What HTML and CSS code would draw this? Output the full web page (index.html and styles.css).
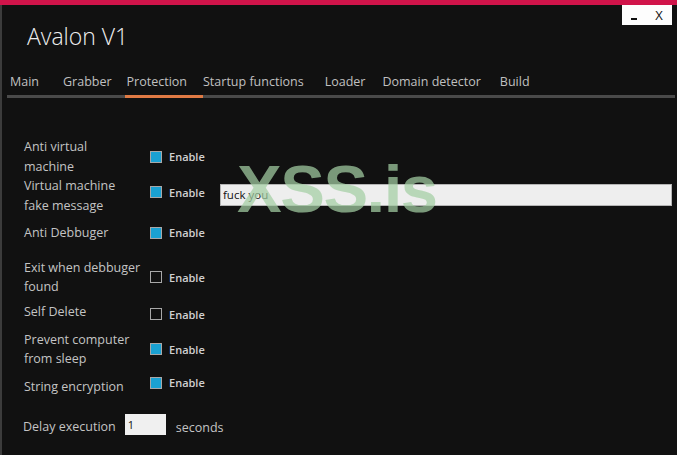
FILE: index.html
```html
<!DOCTYPE html>
<html lang="en">

<head>
    <meta charset="UTF-8">
    <title>Avalon V1</title>
    <link rel="stylesheet" href="styles.css">
</head>

<body>
    <div class="topbar"></div>
    <div class="window">
        <div class="win-buttons">
            <span class="win-min"></span>
            <span class="win-close">X</span>
        </div>

        <h1 class="title">Avalon V1</h1>

        <nav class="tabs">
            <span class="tab tab-main">Main</span>
            <span class="tab tab-grabber">Grabber</span>
            <span class="tab tab-protection active">Protection</span>
            <span class="tab tab-startup">Startup functions</span>
            <span class="tab tab-loader">Loader</span>
            <span class="tab tab-domain">Domain detector</span>
            <span class="tab tab-build">Build</span>
        </nav>

        <div class="options">
            <div class="row">
                <div class="label">Anti virtual<br>machine</div>
                <label class="check"><span class="box checked"></span>Enable</label>
            </div>
            <div class="row">
                <div class="label">Virtual machine<br>fake message</div>
                <label class="check high"><span class="box checked"></span>Enable</label>
                <input class="message" type="text" value="fuck you">
            </div>
            <div class="row gap-m">
                <div class="label">Anti Debbuger</div>
                <label class="check"><span class="box checked"></span>Enable</label>
            </div>
            <div class="row gap-l">
                <div class="label">Exit when debbuger<br>found</div>
                <label class="check"><span class="box"></span>Enable</label>
            </div>
            <div class="row gap-s">
                <div class="label">Self Delete</div>
                <label class="check low"><span class="box"></span>Enable</label>
            </div>
            <div class="row gap-m">
                <div class="label">Prevent computer<br>from sleep</div>
                <label class="check"><span class="box checked"></span>Enable</label>
            </div>
            <div class="row gap-m">
                <div class="label">String encryption</div>
                <label class="check high"><span class="box checked"></span>Enable</label>
            </div>

            <div class="delay">
                <span>Delay execution</span>
                <input class="delay-input" type="text" value="1">
                <span class="seconds">seconds</span>
            </div>
        </div>

        <div class="watermark">XSS.is</div>
    </div>
</body>

</html>
```

FILE: styles.css
```css
body {
    margin: 0;
    width: 677px;
    height: 455px;
    overflow: hidden;
    background-color: #111111;
    font-family: "Open Sans", "Noto Sans", sans-serif;
    color: #c8c8c8;
}

.topbar {
    height: 5px;
    background-color: #d0144a;
}

.window {
    position: relative;
    height: 450px;
    border-left: 2px solid #3c3c3c;
    box-sizing: border-box;
}

.win-buttons {
    position: absolute;
    top: 0;
    right: 5px;
    width: 50px;
    height: 20px;
    background-color: #fdfdfd;
    display: flex;
    align-items: center;
    justify-content: space-around;
    color: #111;
    font-size: 13px;
}

.win-min {
    width: 6px;
    height: 2px;
    margin-top: 8px;
    background-color: #111;
}

.title {
    margin: 0;
    padding: 15px 0 0 25px;
    font-size: 23px;
    font-weight: 300;
    color: #eeeeee;
    line-height: 32px;
}

.tabs {
    display: flex;
    margin: 21px 2px 0 5px;
    border-bottom: 3px solid #4a4a4a;
}

.tab {
    font-size: 12.5px;
    color: #c0c0c0;
    padding: 0 0 5px 0;
    margin-bottom: -3px;
    border-bottom: 3px solid transparent;
}

.tab.active {
    border-color: #e07a44;
}

.tab-main { padding-left: 3px; }
.tab-grabber { margin-left: 24px; }
.tab-protection { margin-left: 13px; padding: 0 16px 5px 2px; }
.tab-loader { margin-left: 21px; }
.tab-domain { margin-left: 17px; }
.tab-build { margin-left: 19px; }

.options {
    padding: 39px 0 0 22px;
}

.row {
    display: flex;
    align-items: center;
}

.gap-s { margin-top: 5px; }
.gap-m { margin-top: 8px; }
.gap-l { margin-top: 15px; }

.label {
    width: 126px;
    font-size: 12.5px;
    line-height: 19.5px;
    color: #c4c4c4;
}

.check {
    display: flex;
    align-items: center;
    font-size: 11px;
    font-weight: 600;
    color: #d0d0d0;
    width: 70px;
}

.check.low { margin-top: 5px; }
.check.high { margin-top: -7px; }

.box {
    width: 10px;
    height: 10px;
    border: 1px solid #a8a8a8;
    margin-right: 7px;
    box-sizing: content-box;
}

.box.checked {
    background-color: #1aa1d2;
}

.message {
    flex: 1;
    height: 22px;
    margin: -2px 5px 0 0;
    padding: 0 2px;
    border: 1px solid #b4b4b4;
    background-color: #eeeeee;
    font-family: "Open Sans", "Noto Sans", sans-serif;
    font-size: 11.5px;
    color: #111;
    box-sizing: border-box;
}

.delay {
    display: flex;
    align-items: center;
    margin: 21px 0 0 -1px;
    font-size: 12.5px;
    color: #c4c4c4;
}

.delay-input {
    width: 41px;
    height: 21px;
    margin: -4px 10px 0 9px;
    padding: 0 3px;
    border: none;
    background-color: #f0f0f0;
    font-family: "Open Sans", "Noto Sans", sans-serif;
    font-size: 11px;
    color: #111;
    box-sizing: border-box;
}

.seconds {
    margin-top: 2px;
}

.watermark {
    position: absolute;
    left: 235px;
    top: 150px;
    font-family: "Liberation Sans", Arial, sans-serif;
    font-size: 67px;
    line-height: 1;
    letter-spacing: -1.5px;
    font-weight: bold;
    color: rgba(163, 207, 163, 0.72);
    pointer-events: none;
}
```
